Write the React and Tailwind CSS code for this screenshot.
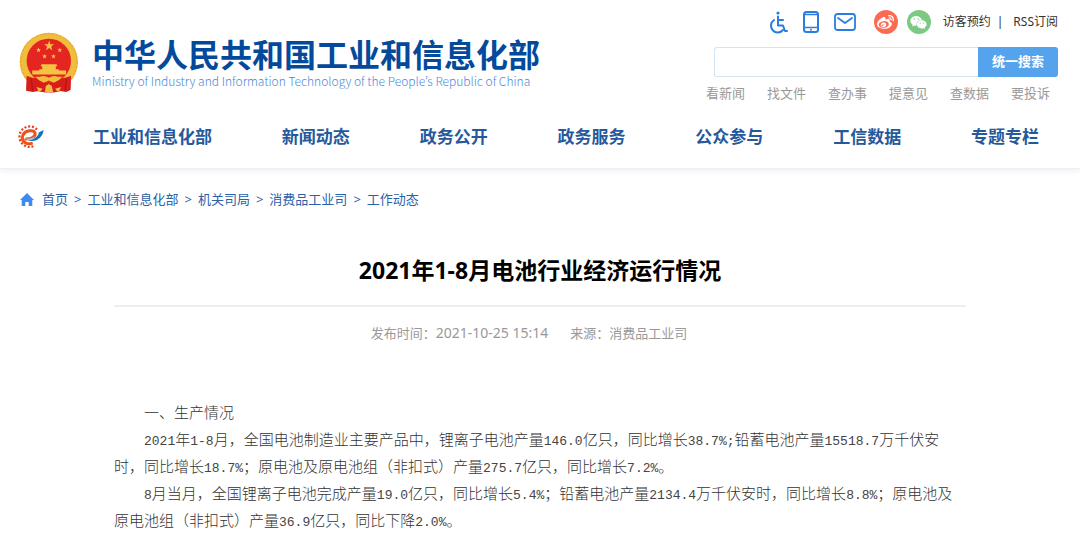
import { Fragment } from "react";
import { FaWeibo, FaWeixin } from "react-icons/fa";

const NAV = ["工业和信息化部", "新闻动态", "政务公开", "政务服务", "公众参与", "工信数据", "专题专栏"];
const QUICK_LINKS = ["看新闻", "找文件", "查办事", "提意见", "查数据", "要投诉"];
const CRUMBS = ["首页", "工业和信息化部", "机关司局", "消费品工业司", "工作动态"];

const PARAGRAPHS = [
  "一、生产情况",
  "2021年1-8月，全国电池制造业主要产品中，锂离子电池产量146.0亿只，同比增长38.7%;铅蓄电池产量15518.7万千伏安时，同比增长18.7%；原电池及原电池组（非扣式）产量275.7亿只，同比增长7.2%。",
  "8月当月，全国锂离子电池完成产量19.0亿只，同比增长5.4%；铅蓄电池产量2134.4万千伏安时，同比增长8.8%；原电池及原电池组（非扣式）产量36.9亿只，同比下降2.0%。",
];

function Emblem() {
  return (
    <svg viewBox="27 22 184 184" className="h-[61px] w-[61px] shrink-0" aria-hidden="true">
      <path d="M52 146 L49 199 L68 203 L86 200 L104 204 H134 L152 200 L170 203 L182 197 L184 146Z" fill="#d81e1c" />
      <circle cx="117" cy="112" r="88" fill="#f0bd3c" />
      <circle cx="117" cy="112" r="85" fill="none" stroke="#dfa42c" strokeWidth="3" strokeDasharray="7 5" />
      <circle cx="117" cy="109" r="67" fill="#e52521" />
      <g fill="#f4c344">
        <path d="M118 48 L121.500 59 H133 L124 66 L127.500 77 L118 70 L108.500 77 L112 66 L103 59 H114.500Z" />
        <path d="M86 69 L88 74 H93 L89 78 L91 83 L86 80 L81 83 L83 78 L79 74 H84Z" />
        <path d="M150 69 L152 74 H157 L153 78 L155 83 L150 80 L145 83 L147 78 L143 74 H148Z" />
        <path d="M104 88 L106 93 H111 L107 97 L109 102 L104 99 L99 102 L101 97 L97 93 H102Z" />
        <path d="M131 88 L133 93 H138 L134 97 L136 102 L131 99 L126 102 L128 97 L124 93 H129Z" />
        <path d="M95 119 H140 L143 125 H138 V134 H147 V138 H169 V150 H67 V138 H88 V134 H97 V125 H92Z" />
      </g>
      <path d="M50 154 Q74 166 92 158 Q104 176 117 176 Q130 176 142 158 Q160 166 184 154 L182 197 L152 200 L134 204 H104 L82 200 L49 199Z" fill="#d81e1c" />
      <path d="M76 157 H90 Q103 151 117 160 Q131 151 144 157 H158 Q148 170 132 175 L117 168 L102 175 Q86 170 76 157Z" fill="#f0bd3c" />
      <path d="M108 185 L117 179 L126 185 L130 203 H105Z M80 188 L98 193 L92 201 H86Z M154 188 L136 193 L142 201 H148Z" fill="#f0bd3c" />
      <path d="M64 162 L68 199 M170 162 L166 199" stroke="#b81517" strokeWidth="4" />
    </svg>
  );
}

function GearLogo() {
  return (
    <svg viewBox="3 0 54 48" className="h-6 w-[27px]" fill="none" aria-hidden="true">
      <path d="M43 9 A20.500 20.500 0 1 0 39 41" stroke="#e8401c" strokeWidth="4.500" strokeDasharray="4 3.600" />
      <path
        d="M21 28 C30 28 41 24 39 16 C37 9 20 10 15 20 C10 31 20 40 32 37"
        stroke="#ee5419"
        strokeWidth="6"
        strokeLinecap="round"
      />
      <path d="M24 30 C34 31 44 25 47 16 L43 17 L56 10 C55 25 40 37 24 30Z" fill="#1670b8" />
      <path d="M19 26 C25 29 34 27 39 22 C36 30 24 33 19 26Z" fill="#9ad4ee" />
    </svg>
  );
}

function WheelchairIcon() {
  return (
    <svg viewBox="0 0 19 23" className="h-[23px] w-[19px]" fill="none" stroke="#2b7de0" strokeWidth="2" strokeLinecap="round" strokeLinejoin="round">
      <circle cx="9" cy="2" r="1.600" fill="#2b7de0" stroke="none" />
      <path d="M9 5.500 V14.500 H14 L16 20 H18" />
      <path d="M9 9 H14" />
      <path d="M5 9 A6.800 6.800 0 1 0 14 19" />
    </svg>
  );
}

function PhoneIcon() {
  return (
    <svg viewBox="0 0 16 22" className="h-[22px] w-4" fill="none" stroke="#2b7de0" strokeWidth="2">
      <rect x="1" y="1" width="14" height="20" rx="2.500" />
      <path d="M1 3.500 H15 M1 16.500 H15" strokeWidth="1.500" />
      <circle cx="8" cy="18.800" r="1" fill="#2b7de0" stroke="none" />
    </svg>
  );
}

function MailIcon() {
  return (
    <svg viewBox="0 0 22 18" className="h-[18px] w-[22px]" fill="none" stroke="#2b7de0" strokeWidth="1.800" strokeLinecap="round" strokeLinejoin="round">
      <rect x="1" y="1" width="20" height="16" rx="2.500" />
      <path d="M4 5 L11 10 L18 5" />
    </svg>
  );
}

function HomeIcon() {
  return (
    <svg viewBox="0 0 14 13" className="h-[13px] w-3.5" fill="#3d8bf2" aria-hidden="true">
      <path d="M7 0 L14 7 H12.300 V13 H8.700 V9 H5.300 V13 H1.700 V7 H0Z" />
    </svg>
  );
}

// Figures are set in a fixed-width face, the rest in the body face.
function Paragraph({ text }) {
  return (
    <p className="indent-[30px]">
      {text.split(/([0-9.%;-]+)/).map((part, i) =>
        i % 2 ? (
          <span key={i} className="font-['Liberation_Mono',monospace] text-[13px] leading-none text-[#444]">{part}</span>
        ) : (
          <Fragment key={i}>{part}</Fragment>
        )
      )}
    </p>
  );
}

function TopBar() {
  return (
    <div className="flex h-6 items-center text-[12px] text-[#333]">
      <a href="#accessible" aria-label="无障碍" className="mr-[15px]"><WheelchairIcon /></a>
      <a href="#mobile" aria-label="手机版" className="mr-[15px]"><PhoneIcon /></a>
      <a href="#mail" aria-label="邮箱" className="mr-[18px]"><MailIcon /></a>
      <a href="#weibo" aria-label="微博" className="mr-[9px] flex size-6 items-center justify-center rounded-full bg-[#fb6b52] text-white">
        <FaWeibo size={17} />
      </a>
      <a href="#wechat" aria-label="微信" className="mr-3 flex size-6 items-center justify-center rounded-full bg-[#7bc983] text-white">
        <FaWeixin size={17} />
      </a>
      <a href="#visit">访客预约</a>
      <span className="mr-2.5 ml-1.5">|</span>
      <a href="#rss">RSS订阅</a>
    </div>
  );
}

export default function App() {
  return (
    <div className="min-h-screen bg-white font-['Noto_Sans','Noto_Sans_CJK_SC',sans-serif]">
      <header className="border-b border-[#eceff3] shadow-[0_2px_5px_rgba(90,110,140,0.10)]">
        <div className="flex items-start justify-between pt-2.5 pr-[22px] pl-[19px]">
          <a href="#home" className="mt-[22px] flex items-center gap-3 font-['Noto_Sans_CJK_SC',sans-serif]">
            <Emblem />
            <span className="whitespace-nowrap">
              <span className="block text-[32px] leading-8 font-bold text-[#044a9c]">中华人民共和国工业和信息化部</span>
              <span lang="en" className="mt-1 block font-['Noto_Sans_CJK_KR',sans-serif] text-[12px] leading-4 font-light text-[#4a8ad8]">
                Ministry of Industry and Information Technology of the People’s Republic of China
              </span>
            </span>
          </a>
          <div className="flex flex-col items-end">
            <TopBar />
            <form className="mt-[13px] flex h-[30px]" onSubmit={(e) => e.preventDefault()}>
              <input
                type="text"
                aria-label="搜索"
                className="w-[264px] rounded-l-[3px] border border-r-0 border-[#d3e3f2] px-2 text-[13px] outline-none"
              />
              <button type="submit" className="w-20 rounded-r-[3px] bg-[#54a3ec] text-[13px] font-bold text-white">
                统一搜索
              </button>
            </form>
            <div className="mt-1.5 mr-2 flex gap-[22px] text-[13px] leading-5 text-[#999]">
              {QUICK_LINKS.map((q) => (
                <a key={q} href="#search">{q}</a>
              ))}
            </div>
          </div>
        </div>
        <nav className="flex h-[65px] items-center pt-0.5 pr-[41px] pl-[17px] text-[17px] font-bold text-[#25599c]">
          <a href="#miit" aria-label="工信部"><GearLogo /></a>
          <div className="ml-[49px] flex flex-1 justify-between whitespace-nowrap">
            {NAV.map((item) => (
              <a key={item} href="#nav">{item}</a>
            ))}
          </div>
        </nav>
      </header>

      <div className="mt-5 flex items-center pl-5 text-[13px] leading-5 text-[#2a62a8]">
        <HomeIcon />
        <div className="ml-2 flex gap-1.5">
          {CRUMBS.map((c, i) => (
            <Fragment key={c}>
              {i > 0 && <span>&gt;</span>}
              <a href="#crumb">{c}</a>
            </Fragment>
          ))}
        </div>
      </div>

      <article className="mx-auto max-w-[852px]">
        <h1 className="mt-[45px] border-b-2 border-[#eee] pb-[19px] text-center text-[23px] leading-8 font-bold text-black">
          2021年1-8月电池行业经济运行情况
        </h1>
        <div className="mt-4 flex justify-center gap-[22px] pr-[22px] text-[13px] leading-5 text-[#999]">
          <span>发布时间：<time className="text-[14px]">2021-10-25 15:14</time></span>
          <span>来源：消费品工业司</span>
        </div>
        <div className="mt-14 text-[15px] leading-[27px] font-light text-[#333]">
          {PARAGRAPHS.map((p) => (
            <Paragraph key={p} text={p} />
          ))}
        </div>
      </article>
    </div>
  );
}
